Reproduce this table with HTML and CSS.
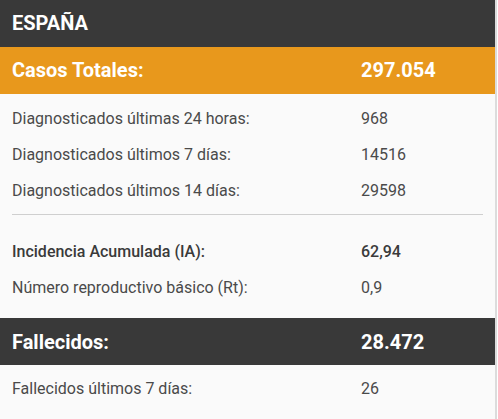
FILE: index.html
```html
<!DOCTYPE html>
<html lang="es">
<head>
<meta charset="utf-8">
<link rel="stylesheet" href="styles.css">
</head>
<body>
<div class="page">
  <div class="panel">
    <div class="title">ESPAÑA</div>
    <div class="bar bar-orange">
      <span class="bar-label">Casos Totales:</span>
      <span class="bar-value">297.054</span>
    </div>
    <div class="section">
      <div class="row"><span class="label">Diagnosticados últimas 24 horas:</span><span class="value">968</span></div>
      <div class="row"><span class="label">Diagnosticados últimos 7 días:</span><span class="value">14516</span></div>
      <div class="row"><span class="label">Diagnosticados últimos 14 días:</span><span class="value">29598</span></div>
      <hr class="divider">
      <div class="row"><span class="label label-strong">Incidencia Acumulada (IA):</span><span class="value value-strong">62,94</span></div>
      <div class="row"><span class="label">Número reproductivo básico (Rt):</span><span class="value">0,9</span></div>
    </div>
    <div class="bar bar-dark">
      <span class="bar-label">Fallecidos:</span>
      <span class="bar-value">28.472</span>
    </div>
    <div class="section section-last">
      <div class="row"><span class="label">Fallecidos últimos 7 días:</span><span class="value">26</span></div>
    </div>
  </div>
  <div class="edge"></div>
</div>
</body>
</html>
```

FILE: styles.css
```css
html, body {
  margin: 0;
  padding: 0;
  background: #ffffff;
}
body {
  font-family: Roboto, "Liberation Sans", sans-serif;
  width: 498px;
  height: 419px;
  overflow: hidden;
}
.page {
  display: flex;
  height: 419px;
}
.panel {
  width: 495px;
  background: #fafafa;
  display: flex;
  flex-direction: column;
}
.edge {
  width: 2px;
  background: #dcdcdc;
}
.title {
  height: 47px;
  background: #393939;
  color: #ffffff;
  font-weight: 700;
  font-size: 20px;
  display: flex;
  align-items: center;
  padding-left: 12px;
}
.bar {
  height: 47px;
  display: flex;
  align-items: center;
  color: #ffffff;
  font-weight: 700;
  font-size: 20px;
}
.bar-orange {
  background: #e8981c;
}
.bar-dark {
  height: 48px;
  background: #393939;
}
.bar-label {
  width: 349px;
  padding-left: 12px;
}
.section {
  padding: 6.5px 12px 12px 12px;
}
.section-last {
  padding-top: 5.5px;
}
.row {
  display: flex;
  align-items: center;
  height: 36px;
  font-size: 16px;
  color: #4a4a4a;
}
.label {
  width: 349px;
}
.label-strong, .value-strong {
  font-weight: 500;
  color: #3a3a3a;
}
.divider {
  border: 0;
  border-top: 1px solid #cfcfcf;
  margin: 5.5px 0 19px 0;
  height: 0;
}
```
